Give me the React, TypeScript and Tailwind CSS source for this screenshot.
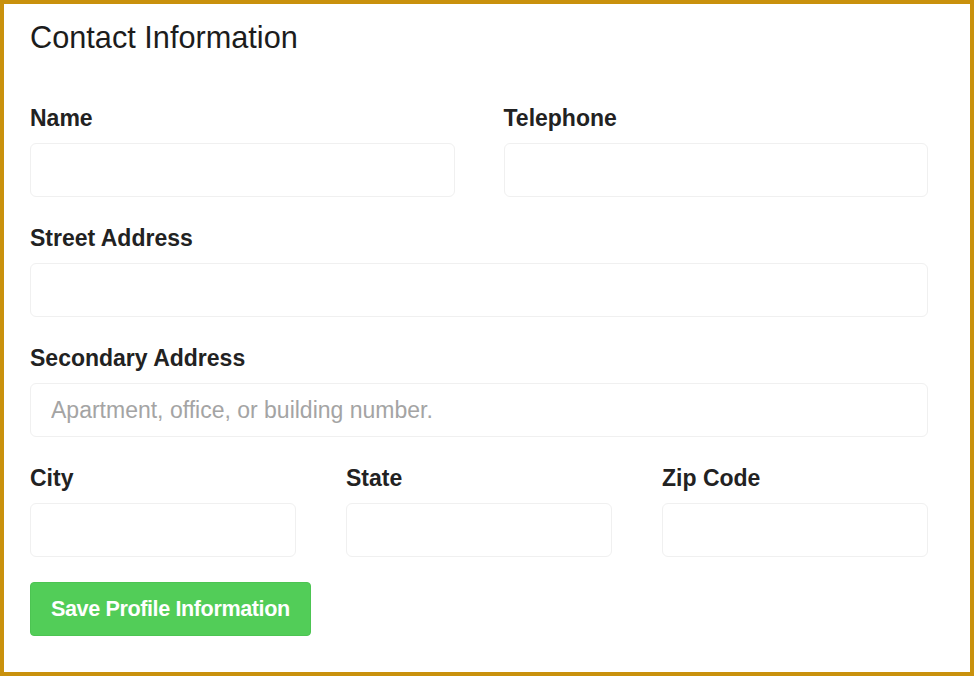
import React from 'react';

const font = { fontFamily: '"Liberation Sans", Arial, sans-serif' };

const Field = ({ label, placeholder }: { label: string; placeholder?: string }) => (
  <div className="flex flex-col">
    <label className="text-[23px] leading-[26px] font-bold text-[#222] mb-3">{label}</label>
    <input
      type="text"
      placeholder={placeholder}
      className="h-[54px] w-full rounded-[6px] border border-[#f0f0f0] bg-white px-5 text-[23px] text-[#333] placeholder:text-[#a4a4a4] outline-none"
    />
  </div>
);

export default function App() {
  return (
    <div className="w-[974px] h-[676px] border-4 border-[#c9910d] bg-white" style={font}>
      <div className="w-[924px] pl-[26px] pt-4">
        <h1 className="text-[30.7px] leading-9 text-[#1c1c1c] mb-[49px]">Contact Information</h1>
        <form className="flex flex-col gap-7" onSubmit={e => e.preventDefault()}>
          <div className="grid grid-cols-2 gap-x-[49px]">
            <Field label="Name" />
            <Field label="Telephone" />
          </div>
          <Field label="Street Address" />
          <Field label="Secondary Address" placeholder="Apartment, office, or building number." />
          <div className="grid grid-cols-3 gap-x-[50px]">
            <Field label="City" />
            <Field label="State" />
            <Field label="Zip Code" />
          </div>
          <div className="-mt-[3px]">
            <button
              type="submit"
              className="h-[54px] px-5 rounded-[4px] bg-[#52cd58] border border-[#4cc452] text-white font-bold text-[21.6px] tracking-[-0.4px]"
            >
              Save Profile Information
            </button>
          </div>
        </form>
      </div>
    </div>
  );
}
